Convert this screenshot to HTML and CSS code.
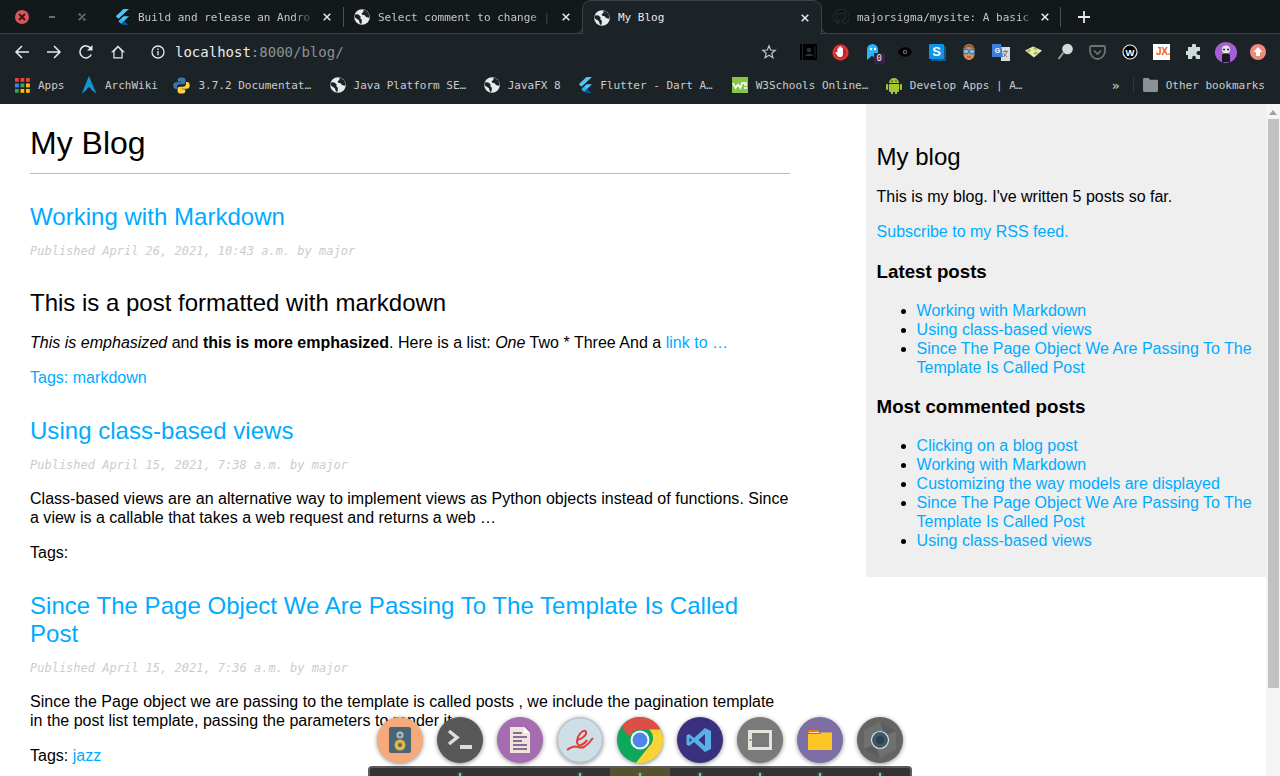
FILE: index.html
```html
<!DOCTYPE html>
<html lang="en">
<head>
<meta charset="utf-8">
<title>My Blog</title>
<link rel="stylesheet" href="styles.css">
</head>
<body>
<svg class="defs" width="0" height="0" aria-hidden="true">
  <defs>
    <symbol id="globe" viewBox="0 0 16 16">
      <circle cx="8" cy="8" r="7.8" fill="#e8eaed"/>
      <path d="M.8 5.500 4 5.200l2.700 2.300-.4 1.800 1.600 1.500-.3 3.700-1.600.2-1.100-3.400L.6 8.300zM9.200.9l.4 1.800-2 1.500.6 1.600 2.500.4 1.300 1.800 3 .8.600-1.500-1.400-3.900L11.500 1.200z" fill="#1c2326"/>
    </symbol>
    <symbol id="flutter" viewBox="0 0 14 16">
      <path d="M8.500 0H14L3.500 9.800.8 7.300z" fill="#54c5f8"/>
      <path d="M14 7.300H8.500L3.600 12.200l2.700 2.600z" fill="#54c5f8"/>
      <path d="M3.600 12.200 6.300 9.600l2.600 2.500-2.600 2.700z" fill="#29b6f6"/>
      <path d="M6.300 14.800l2.600-2.700 5.100 3.900H8.500z" fill="#01579b"/>
    </symbol>
    <symbol id="close" viewBox="0 0 8 8">
      <path d="M.7.700l6.600 6.600M7.300.700.7 7.300" stroke="#e8eaed" stroke-width="1.500" fill="none"/>
    </symbol>
  </defs>
</svg>

<header class="chrome">
  <div class="tabstrip">
    <div class="wm">
      <span class="wm-close"><svg width="8" height="8" viewBox="0 0 8 8"><path d="M1 1l6 6M7 1 1 7" stroke="#3a1516" stroke-width="1.900"/></svg></span>
      <span class="wm-min"></span>
      <svg class="wm-pin" width="8" height="8" viewBox="0 0 8 8"><path d="M0 1.500 3 3 2 0zM8 6.500 5 5 6 8zM2 2l4 4M6.500 .5 7.500 1.500 1.500 7.500 .5 6.500z" fill="#62676a" stroke="#62676a" stroke-width=".6"/></svg>
    </div>
    <div class="tab tab-first">
      <svg class="tab-ic" width="14" height="16"><use href="#flutter"/></svg>
      <span class="tab-t">Build and release an Andro</span>
      <svg class="tab-x" width="8" height="8"><use href="#close"/></svg>
    </div>
    <div class="tab-sep"></div>
    <div class="tab tab-second">
      <svg class="tab-ic" width="16" height="16"><use href="#globe"/></svg>
      <span class="tab-t">Select comment to change |</span>
      <svg class="tab-x" width="8" height="8"><use href="#close"/></svg>
    </div>
    <div class="tab tab-active">
      <svg class="tab-ic" width="16" height="16"><use href="#globe"/></svg>
      <span class="tab-t">My Blog</span>
      <svg class="tab-x" width="8" height="8"><use href="#close"/></svg>
    </div>
    <div class="tab tab-last">
      <svg class="tab-ic" width="16" height="16" viewBox="0 0 16 16"><path fill="#0f1315" stroke="#2b3033" d="M8 .5a7.500 7.500 0 0 0-2.400 14.600c.4.100.5-.2.500-.4v-1.300c-2.100.4-2.600-.9-2.600-.9-.4-.9-.9-1.100-.9-1.100-.7-.5.100-.5.100-.5.800.100 1.200.8 1.200.8.700 1.200 1.800.9 2.300.7 0-.5.300-.9.500-1.100-1.700-.2-3.400-.8-3.400-3.700 0-.8.300-1.500.8-2-.100-.2-.3-1 .1-2 0 0 .6-.2 2.100.8a7 7 0 0 1 3.800 0c1.400-1 2.100-.8 2.100-.8.400 1 .200 1.800.100 2 .5.500.8 1.200.8 2 0 2.900-1.800 3.500-3.400 3.700.3.200.5.700.5 1.400v2.100c0 .2.100.5.500.4A7.500 7.500 0 0 0 8 .5z"/></svg>
      <span class="tab-t">majorsigma/mysite: A basic</span>
      <svg class="tab-x" width="8" height="8"><use href="#close"/></svg>
    </div>
    <div class="tab-sep"></div>
    <svg class="newtab" width="12" height="12" viewBox="0 0 12 12"><path d="M6 0v12M0 6h12" stroke="#e8eaed" stroke-width="1.800"/></svg>
  </div>

  <div class="toolbar">
    <svg class="nav-ic" width="16" height="16" viewBox="0 0 16 16"><path d="M15 8H2.500M8 2 2 8l6 6" fill="none" stroke="#e8eaed" stroke-width="1.500"/></svg>
    <svg class="nav-ic" width="16" height="16" viewBox="0 0 16 16"><path d="M1 8h12.500M8 2l6 6-6 6" fill="none" stroke="#e8eaed" stroke-width="1.500"/></svg>
    <svg class="nav-ic" width="16" height="16" viewBox="0 0 16 16"><path d="M13.300 10.500A6 6 0 1 1 12.800 4.400" fill="none" stroke="#e8eaed" stroke-width="1.500"/><path d="M14.500 1v5.500H9z" fill="#e8eaed"/></svg>
    <svg class="nav-ic" width="16" height="16" viewBox="0 0 16 16"><path d="M8 1.500 1 8.300h2.300V14.500h9.400V8.300H15zM4.500 7.500 8 3.500l3.500 4v5.700h-7z" fill="#e8eaed" fill-rule="evenodd"/></svg>
    <svg class="info" width="16" height="16" viewBox="0 0 16 16"><circle cx="8" cy="8" r="6" fill="none" stroke="#e8eaed" stroke-width="1.300"/><path d="M8 7v4.200M8 4.600v1.300" stroke="#e8eaed" stroke-width="1.300"/></svg>
    <div class="url"><span class="url-host">localhost</span><span class="url-rest">:8000/blog/</span></div>
    <svg class="star" width="16" height="16" viewBox="0 0 16 16"><path d="M8 1.800 9.700 6l4.600.3-3.500 3 1.100 4.500L8 11.300 4.100 13.800l1.100-4.500-3.500-3L6.300 6z" fill="none" stroke="#c4c7ca" stroke-width="1.200"/></svg>
    <div class="ext">
      <svg width="17" height="16" viewBox="0 0 17 16"><rect width="17" height="16" fill="#000"/><path d="M2.500 0v16M15 2v12" stroke="#22282a"/><circle cx="9" cy="6" r="2.300" fill="#2d3336"/><path d="M5 12c0-3 8-3 8 0z" fill="#2d3336"/></svg>
      <svg width="17" height="17" viewBox="0 0 16 16"><circle cx="8" cy="8" r="7.800" fill="#d02023"/><circle cx="8" cy="8" r="6.300" fill="none" stroke="#e7888a" stroke-width=".5"/><path d="M5 8V4.700c0-1 1.200-1 1.200 0V3.300c0-1 1.400-1 1.400 0v-.4c0-.9 1.400-.9 1.400 0v1.200c0-.8 1.300-.8 1.300 0v5.200c0 2-1 3-2.900 3-1.500 0-2-.6-2.800-2L3.300 8.500c-.4-.9.700-1.400 1.200-.7z" fill="#fff"/></svg>
      <span class="ghost"><svg width="14" height="18" viewBox="0 0 14 18"><path d="M1 17V6.500a5.500 5.500 0 0 1 11 0V14l-2-1.500-2 2-2-2-3 3z" fill="#29b6f6"/><circle cx="5" cy="6" r="1.200" fill="#fff"/><circle cx="9" cy="6" r="1.200" fill="#fff"/></svg><span class="ghost-n">0</span></span>
      <svg width="14" height="10" viewBox="0 0 14 10"><path d="M0 5c3-6.500 11-6.500 14 0-3 6.500-11 6.500-14 0z" fill="#000"/><circle cx="7" cy="5" r="2.300" fill="#5f6466"/><circle cx="7" cy="5" r="1" fill="#000"/></svg>
      <svg width="17" height="17" viewBox="0 0 17 17"><rect x="2" y="2" width="15" height="15" fill="#075a8e"/><rect width="15" height="15" rx="1" fill="#0f95e8"/><text x="7.500" y="12" class="ext-s">S</text></svg>
      <svg width="16" height="18" viewBox="0 0 16 18"><path d="M2.500 6.500c0-7 11-7 11 0v5c0 3-3 5.500-5.500 5.500s-5.500-2.500-5.500-5.500z" fill="#d09165"/><path d="M2 8C2 0 14 0 14 8c-2-3-3-4-6-4S4 5 2 8z" fill="#94562c"/><circle cx="5" cy="8.500" r="2.500" fill="#8ac2ea" stroke="#1e6fa8"/><circle cx="11" cy="8.500" r="2.500" fill="#8ac2ea" stroke="#1e6fa8"/><path d="M6 14h4" stroke="#8a4a2a"/></svg>
      <svg width="18" height="17" viewBox="0 0 18 17"><path d="M9 3h9v14H9z" fill="#d8dcdf"/><path d="M1 0h8l2 13H1a1 1 0 0 1-1-1V1a1 1 0 0 1 1-1z" fill="#3f7fe0"/><text x="5.500" y="9" class="ext-g">G</text><path d="M11 7.500h5M13.500 6v1.500M11.500 13l3.500-5M11.500 9l3.500 4" stroke="#666" stroke-width=".8"/></svg>
      <svg width="17" height="12" viewBox="0 0 17 12"><path d="M0 4.500 8 .5l9 4-8 7z" fill="#e6e8c0"/><path d="M1.500 4.500l3-1.500 2 1.500-3 2zM8 7.500l3-2 2.500 1-3 2.500zM8 2.500l2.500-1 2 2-2.500 1z" fill="#a6c52e"/></svg>
      <svg width="16" height="18" viewBox="0 0 16 18"><circle cx="10.500" cy="6" r="5.300" fill="#d7d8d8"/><path d="M6.500 9.500 1.500 16" stroke="#9a9c9d" stroke-width="2"/></svg>
      <svg width="17" height="15" viewBox="0 0 17 15"><path d="M1 2.500C1 1.500 1.700 1 2.500 1h12c.8 0 1.500.5 1.500 1.500V6c0 4-3.500 8-7.500 8S1 10 1 6z" fill="none" stroke="#6f7376" stroke-width="1.800"/><path d="M5 5.500 8.500 9 12 5.500" fill="none" stroke="#6f7376" stroke-width="1.600"/></svg>
      <svg width="16" height="16" viewBox="0 0 16 16"><circle cx="8" cy="8" r="7" fill="#000" stroke="#e8eaed" stroke-width="1.200"/><text x="8" y="11.500" class="ext-w">W</text></svg>
      <span class="jx">JX.</span>
      <svg width="16" height="16" viewBox="0 0 16 16"><path d="M6 1.500a2 2 0 0 1 4 0V3h4v4h-1.500a2 2 0 0 0 0 4H14v4H9.800v-1.500a1.800 1.800 0 0 0-3.600 0V15H2v-4H.5a2 2 0 0 1 0-4H2V3h4z" fill="#d0dcd8"/></svg>
      <svg width="22" height="21" viewBox="0 0 22 21"><ellipse cx="11" cy="10.500" rx="11" ry="10.500" fill="#a55fd6"/><circle cx="11" cy="7.500" r="4" fill="#e6e6e6"/><path d="M7 20v-7c0-2 8-2 8 0v7z" fill="#1a1a1a"/><path d="M8 7.500h2M12 7.500h2" stroke="#222" stroke-width="1.500"/></svg>
      <svg width="16" height="16" viewBox="0 0 16 16"><circle cx="8" cy="8" r="8" fill="#ec8a80"/><path d="M8 3l4.500 5H10v4H6V8H3.500z" fill="#fff"/></svg>
    </div>
  </div>

  <div class="bookmarks">
    <div class="bm">
      <svg width="15" height="15" viewBox="0 0 15 15"><rect width="3.800" height="3.800" fill="#ea4335"/><rect x="5.500" width="3.800" height="3.800" fill="#ea4335"/><rect x="11" width="3.800" height="3.800" fill="#ea4335"/><rect y="5.500" width="3.800" height="3.800" fill="#4285f4"/><rect x="5.500" y="5.500" width="3.800" height="3.800" fill="#34a853"/><rect x="11" y="5.500" width="3.800" height="3.800" fill="#fbbc05"/><rect y="11" width="3.800" height="3.800" fill="#34a853"/><rect x="5.500" y="11" width="3.800" height="3.800" fill="#fbbc05"/><rect x="11" y="11" width="3.800" height="3.800" fill="#fbbc05"/></svg>
      <span>Apps</span>
    </div>
    <div class="bm bm-arch">
      <svg width="16" height="18" viewBox="0 0 16 18"><path d="M8 0 15.500 18C12.500 15.500 10.800 14 10 13.500c-.4-3-3.600-3-4 0C5.200 14 3.500 15.500.5 18z" fill="#1793d1"/></svg>
      <span>ArchWiki</span>
    </div>
    <div class="bm bm-py">
      <svg width="17" height="17" viewBox="0 0 16 16"><path d="M8 .5c-3 0-3.500 1-3.500 2.200V4.500H8V5H2.800C1 5 .3 6.300.3 8s.8 3.200 2.200 3.200h1.300V9.300c0-1.400 1.200-2.500 2.600-2.500h3.300c1.200 0 2-.9 2-2V2.700C11.700 1.300 10.400.500 8 .5z" fill="#3c78aa"/><path d="M8 15.500c3 0 3.500-1 3.500-2.200v-1.800H8V11h5.200c1.800 0 2.500-1.300 2.500-3s-.8-3.200-2.200-3.200h-1.300v1.900c0 1.400-1.200 2.500-2.600 2.500H6.300c-1.200 0-2 .9-2 2v2.100c0 1.400 1.300 2.200 3.700 2.200z" fill="#fdd23e"/></svg>
      <span>3.7.2 Documentat…</span>
    </div>
    <div class="bm">
      <svg width="16" height="16"><use href="#globe"/></svg>
      <span>Java Platform SE…</span>
    </div>
    <div class="bm">
      <svg width="16" height="16"><use href="#globe"/></svg>
      <span>JavaFX 8</span>
    </div>
    <div class="bm bm-flutter">
      <svg width="14" height="16"><use href="#flutter"/></svg>
      <span>Flutter - Dart A…</span>
    </div>
    <div class="bm">
      <svg width="16" height="16" viewBox="0 0 16 16"><rect width="16" height="16" fill="#8bc34a"/><path d="M1 6l2.500 5L6 7.500 8.500 11 10 6h5M12 8h3M12 11h3" fill="none" stroke="#fff" stroke-width="1.500"/></svg>
      <span>W3Schools Online…</span>
    </div>
    <div class="bm">
      <svg width="16" height="18" viewBox="0 0 16 18"><path d="M3 7a5 5 0 0 1 10 0zM3 8h10v7a1 1 0 0 1-1 1h-1v2H9v-2H7v2H5v-2H4a1 1 0 0 1-1-1z" fill="#a4c639"/><rect x="0" y="8" width="2.200" height="6" rx="1" fill="#a4c639"/><rect x="13.800" y="8" width="2.200" height="6" rx="1" fill="#a4c639"/><circle cx="6" cy="5" r=".7" fill="#1c2326"/><circle cx="10" cy="5" r=".7" fill="#1c2326"/></svg>
      <span>Develop Apps | A…</span>
    </div>
    <span class="bm-more">»</span>
    <div class="bm-sep"></div>
    <div class="bm bm-other">
      <svg width="15" height="14" viewBox="0 0 15 14"><path d="M0 1.500C0 .7.600 0 1.400 0h4.100l1.500 1.800h6.600c.8 0 1.400.6 1.400 1.400V12.600c0 .8-.6 1.400-1.400 1.400H1.400C.6 14 0 13.400 0 12.600z" fill="#8b9194"/></svg>
      <span>Other bookmarks</span>
    </div>
  </div>
</header>

<div class="viewport">
  <main class="content">
    <h1>My Blog</h1>
    <article class="post">
      <h2><a href="#">Working with Markdown</a></h2>
      <p class="date">Published April 26, 2021, 10:43 a.m. by major</p>
      <h3 class="md-h">This is a post formatted with markdown</h3>
      <p><em>This is emphasized</em> and <strong>this is more emphasized</strong>. Here is a list: <em>One</em> Two * Three And a <a href="#">link to …</a></p>
      <p><a href="#">Tags: markdown</a></p>
    </article>
    <article class="post">
      <h2><a href="#">Using class-based views</a></h2>
      <p class="date">Published April 15, 2021, 7:38 a.m. by major</p>
      <p>Class-based views are an alternative way to implement views as Python objects instead of functions. Since a view is a callable that takes a web request and returns a web …</p>
      <p>Tags:</p>
    </article>
    <article class="post">
      <h2><a href="#">Since The Page Object We Are Passing To The Template Is Called Post</a></h2>
      <p class="date">Published April 15, 2021, 7:36 a.m. by major</p>
      <p>Since the Page object we are passing to the template is called posts , we include the pagination template in the post list template, passing the parameters to render it.</p>
      <p>Tags: <a href="#">jazz</a></p>
    </article>
  </main>
  <aside class="sidebar">
    <h2>My blog</h2>
    <p>This is my blog. I've written 5 posts so far.</p>
    <p><a href="#">Subscribe to my RSS feed.</a></p>
    <h3>Latest posts</h3>
    <ul>
      <li><a href="#">Working with Markdown</a></li>
      <li><a href="#">Using class-based views</a></li>
      <li><a href="#">Since The Page Object We Are Passing To The Template Is Called Post</a></li>
    </ul>
    <h3>Most commented posts</h3>
    <ul>
      <li><a href="#">Clicking on a blog post</a></li>
      <li><a href="#">Working with Markdown</a></li>
      <li><a href="#">Customizing the way models are displayed</a></li>
      <li><a href="#">Since The Page Object We Are Passing To The Template Is Called Post</a></li>
      <li><a href="#">Using class-based views</a></li>
    </ul>
  </aside>
  <div class="scrollbar">
    <div class="sb-up"></div>
    <div class="sb-thumb"></div>
  </div>
  <div class="dock">
    <div class="dock-icons">
      <svg width="46" height="46" viewBox="0 0 46 46"><circle cx="23" cy="23" r="23" fill="#f6a97a"/><rect x="12" y="10" width="22" height="26" rx="2" fill="#4a6578"/><circle cx="23" cy="18" r="3.500" fill="#b0bec5"/><circle cx="23" cy="18" r="1.500" fill="#4a6578"/><circle cx="23" cy="28" r="5.500" fill="#e3b73f"/><circle cx="23" cy="28" r="2" fill="#4a6578"/></svg>
      <svg width="46" height="46" viewBox="0 0 46 46"><circle cx="23" cy="23" r="23" fill="#585858"/><path d="M12 14l8 6.500-8 6.500" fill="none" stroke="#ddd" stroke-width="3.500"/><path d="M23 30h12" stroke="#ddd" stroke-width="4"/></svg>
      <svg width="46" height="46" viewBox="0 0 46 46"><circle cx="23" cy="23" r="23" fill="#a56cb0"/><path d="M13 10h14l6 6v20H13z" fill="#ece6da"/><path d="M27 10l6 6h-6z" fill="#fff"/><path d="M16 16h9M16 20h14M16 24h9M16 28h14M16 32h14" stroke="#8d6a97" stroke-width="1.800"/></svg>
      <svg width="46" height="46" viewBox="0 0 46 46"><circle cx="23" cy="23" r="22.300" fill="#cfdfe8" stroke="#bcc6cc" stroke-width="1.400"/><path d="M20 23c5-1 10-5 9-8-1-3-6 0-8 5-2 5-1 9 3 8 3-1 5-3 6-5M10 33c4-3 8-4 11-3 3 1 4 1 6 0 3-2 6-5 9-9" fill="none" stroke="#e53935" stroke-width="2"/></svg>
      <svg width="46" height="46" viewBox="0 0 46 46"><circle cx="23" cy="23" r="23" fill="#0fa75c"/><path d="M23 0a23 23 0 0 1 20.500 12.500H23a11 11 0 0 0-10.500 7.500L4.500 9.500A23 23 0 0 1 23 0z" fill="#db4f47"/><path d="M43.500 12.500A23 23 0 0 1 19 45.700L32 29.500A11 11 0 0 0 32 12.500z" fill="#fcd336"/><circle cx="23" cy="23" r="9.500" fill="#fff"/><circle cx="23" cy="23" r="7.500" fill="#4e87e8"/></svg>
      <svg width="46" height="46" viewBox="0 0 46 46"><circle cx="23" cy="23" r="23" fill="#3a317c"/><path d="M28 11l6 3v18l-6 3-11-10-5 4-2.500-1.500V18.500L12 17l5 4zM28 17l-6.500 6 6.500 6zM12.500 20.500v5L15 23z" fill="#5ab0e8" fill-rule="evenodd"/></svg>
      <svg width="46" height="46" viewBox="0 0 46 46"><circle cx="23" cy="23" r="23" fill="#7a7a7a"/><path d="M11 13h24v20H11zM15 16v14h17V16z" fill="#e8e4da" fill-rule="evenodd"/><rect x="12.500" y="22" width="2" height="2" fill="#888"/></svg>
      <svg width="46" height="46" viewBox="0 0 46 46"><circle cx="23" cy="23" r="23" fill="#7e6ea6"/><path d="M11 14a1 1 0 0 1 1-1h9l2 3H11z" fill="#f57c00"/><path d="M11 17h12l1-1.500h11V33H11z" fill="#fdc526"/><path d="M12 15.500h10" stroke="#fff" stroke-width=".8"/></svg>
      <svg width="46" height="46" viewBox="0 0 46 46"><circle cx="23" cy="23" r="23" fill="#646464"/><path d="M23 5 39 14v18L23 41 7 32V14z" fill="#707070"/><path d="M23 5 39 14 28 19zM7 32 18 27 23 41z" fill="#5c5c5c"/><circle cx="23" cy="23" r="8.500" fill="#3d5868" stroke="#d9e2e6" stroke-width="1.200"/><circle cx="23" cy="23" r="4" fill="#2d4250"/></svg>
    </div>
    <div class="dock-bar">
      <i class="slot slot-off"></i><i class="slot"></i><i class="slot slot-off"></i><i class="slot"></i><i class="slot slot-on"></i><i class="slot"></i><i class="slot"></i><i class="slot"></i><i class="slot"></i>
    </div>
  </div>
</div>
</body>
</html>
```

FILE: styles.css
```css
* { box-sizing: border-box; }
html, body { margin: 0; height: 776px; overflow: hidden; }
body { display: flex; flex-direction: column; background: #fff; font-family: "Liberation Sans", Arial, sans-serif; color: #000; font-size: 16px; line-height: 19px; }
.defs { position: absolute; }

/* browser chrome */
.chrome { flex: none; height: 104px; background: #1c2326; color: #e8eaed; font-family: "DejaVu Sans Mono", monospace; font-size: 11px; display: flex; flex-direction: column; }
.tabstrip { height: 34px; flex: none; background: #13181b; border-bottom: 1px solid #3c4245; display: flex; align-items: center; }
.wm { width: 110px; height: 34px; align-self: flex-start; flex: none; display: flex; align-items: center; padding-left: 15px; }
.wm-close { width: 14px; height: 14px; border-radius: 50%; background: #d9565c; display: flex; align-items: center; justify-content: center; }
.wm-min { width: 6px; height: 2px; background: #6a6e70; margin-left: 20px; }
.wm-pin { margin-left: 23px; flex: none; }
.tab { height: 34px; align-self: flex-start; display: flex; align-items: center; flex: none; position: relative; }
.tab-ic { flex: none; }
.tab-t { flex: 1; overflow: hidden; white-space: nowrap; margin-left: 8px; color: #c4c7ca; min-width: 0; }
.tab-x { flex: none; margin: 0 2px 0 8px; }
.tab-first { width: 233px; padding: 0 10px 0 5px; }
.tab-first .tab-t { margin-left: 9px; -webkit-mask-image: linear-gradient(90deg, #000 88%, transparent 100%); mask-image: linear-gradient(90deg, #000 88%, transparent 100%); }
.tab-second { width: 238px; padding: 0 10px 0 10px; }
.tab-second .tab-t { -webkit-mask-image: linear-gradient(90deg, #000 85%, transparent 100%); mask-image: linear-gradient(90deg, #000 85%, transparent 100%); }
.tab-active { width: 240px; padding: 0 10px 0 11px; background: #1c2326; border: 1px solid #3c4245; border-bottom: 0; border-radius: 9px 9px 0 0; }
.tab-active::before, .tab-active::after { content: ""; position: absolute; bottom: 0; width: 7px; height: 7px; background: #13181b; border-bottom: 1px solid #3c4245; }
.tab-active::before { left: -8px; border-right: 1px solid #3c4245; border-bottom-right-radius: 7px; }
.tab-active::after { right: -8px; border-left: 1px solid #3c4245; border-bottom-left-radius: 7px; }
.tab-active .tab-t { color: #e8eaed; }
.tab-last { width: 238px; padding: 0 9px 0 11px; }
.tab-last .tab-t { -webkit-mask-image: linear-gradient(90deg, #000 93%, transparent 100%); mask-image: linear-gradient(90deg, #000 93%, transparent 100%); }
.tab-sep { width: 1px; height: 20px; background: #4a4f52; flex: none; }
.newtab { flex: none; margin-left: 17px; }
.toolbar { height: 36px; flex: none; display: flex; align-items: center; padding-left: 14px; }
.nav-ic { flex: none; margin-right: 16px; }
.info { margin-left: 8px; flex: none; }
.url { font-size: 14px; margin-left: 9px; flex: none; white-space: nowrap; }
.url-host { color: #e8eaed; }
.url-rest { color: #8d9194; }
.star { margin-left: 417px; flex: none; }
.ext { display: grid; grid-template-columns: repeat(15, 32.100px); align-items: center; justify-items: center; margin-left: 16px; flex: none; }
.ghost { position: relative; display: block; width: 14px; height: 18px; }
.ghost-n { position: absolute; left: 8px; top: 10px; width: 11px; height: 11px; background: #3c1f45; color: #e8eaed; font-size: 9px; line-height: 11px; text-align: center; }
.ext-s { font: bold 13px "Liberation Sans", sans-serif; fill: #fff; text-anchor: middle; }
.ext-g { font: bold 7px "Liberation Sans", sans-serif; fill: #fff; text-anchor: middle; }
.ext-w { font: bold 9.500px "Liberation Sans", sans-serif; fill: #fff; text-anchor: middle; }
.jx { width: 17px; height: 16px; background: #fff; color: #f05a1a; font: bold 10px/16px "Liberation Sans", sans-serif; letter-spacing: -.3px; text-align: right; white-space: nowrap; }
.bookmarks { height: 34px; flex: none; display: flex; align-items: center; padding: 0 0 4px 15px; }
.bm { display: flex; align-items: center; gap: 8px; color: #c9cccf; white-space: nowrap; flex: none; margin-right: 17.500px; }
.bm:first-child { margin-right: 16.500px; }
.bm-arch { margin-right: 15.500px; }
.bm-py { margin-right: 18.500px; }
.bm-flutter { margin-right: 19px; }
.bm > svg { flex: none; }
.bm-more { margin-left: auto; color: #d5d8da; font-size: 13px; margin-right: 13px; }
.bm-sep { width: 1px; height: 16px; background: #2f3538; margin-right: 9px; }
.bm-other { margin-right: 15px; }

/* page */
.viewport { flex: 1; position: relative; display: flex; min-height: 0; overflow: hidden; }
.content { width: 820px; padding: 0 30px; flex: none; }
.content h1 { font-size: 32px; font-weight: 400; line-height: 37px; margin: 21px 0 0; padding-bottom: 11px; border-bottom: 1px solid #bbb; }
.post h2 { font-size: 24px; font-weight: 400; line-height: 28px; margin: 29px 0 0; letter-spacing: .03px; }
.post + .post h2 { margin-top: 30px; }
.content a, .sidebar a { color: #00abff; text-decoration: none; }
.post p { margin: 16px 0 0; letter-spacing: .015px; }
.post p.date { margin: 11px 0 0; color: #ccc; font: italic 12px/19px "DejaVu Sans Mono", monospace; letter-spacing: 0; }
.post p.date + p { margin-top: 14px; }
.md-h { font-size: 24px; font-weight: 400; line-height: 28px; margin: 28px 0 0; }
.sidebar { position: absolute; left: 866px; top: 0; width: 400px; height: 473px; background: #efefef; padding: 0 10.600px; }
.sidebar h2 { font-size: 24px; font-weight: 400; line-height: 28px; margin: 39px 0 0; }
.sidebar p { margin: 16px 0 0; }
.sidebar h3 { font-size: 18.720px; line-height: 22px; margin: 20px 0 0; }
.sidebar ul { margin: 18px 0 0; padding-left: 40px; }
.sidebar ul + h3 { margin-top: 19px; }
.scrollbar { position: absolute; right: 0; top: 0; bottom: 0; width: 14px; background: #f5f5f5; }
.sb-up { width: 0; height: 0; margin: 6px auto 0; border: 4px solid transparent; border-top: 0; border-bottom: 5px solid #a3a3a3; }
.sb-thumb { position: absolute; left: 2px; right: 1px; top: 15px; height: 569px; background: #c1c1c1; }

/* dock */
.dock { position: absolute; left: 368px; bottom: 0; width: 544px; display: flex; flex-direction: column; }
.dock-icons { display: flex; gap: 14px; padding-left: 9px; height: 49px; }
.dock-icons svg { flex: none; filter: drop-shadow(0 1px 2px rgba(0,0,0,.45)); }
.dock-bar { height: 10px; background: #333; border: 2px solid #5c5c5c; border-bottom: 0; border-radius: 4px 4px 0 0; display: flex; }
.slot { width: 60px; flex: none; position: relative; }
.slot::after { content: ""; position: absolute; left: 29px; top: 5px; width: 2px; height: 3px; background: #4ad2c0; box-shadow: 0 0 3px #4ad2c0; }
.slot-off::after { display: none; }
.slot-on { background: #55502f; }
```
